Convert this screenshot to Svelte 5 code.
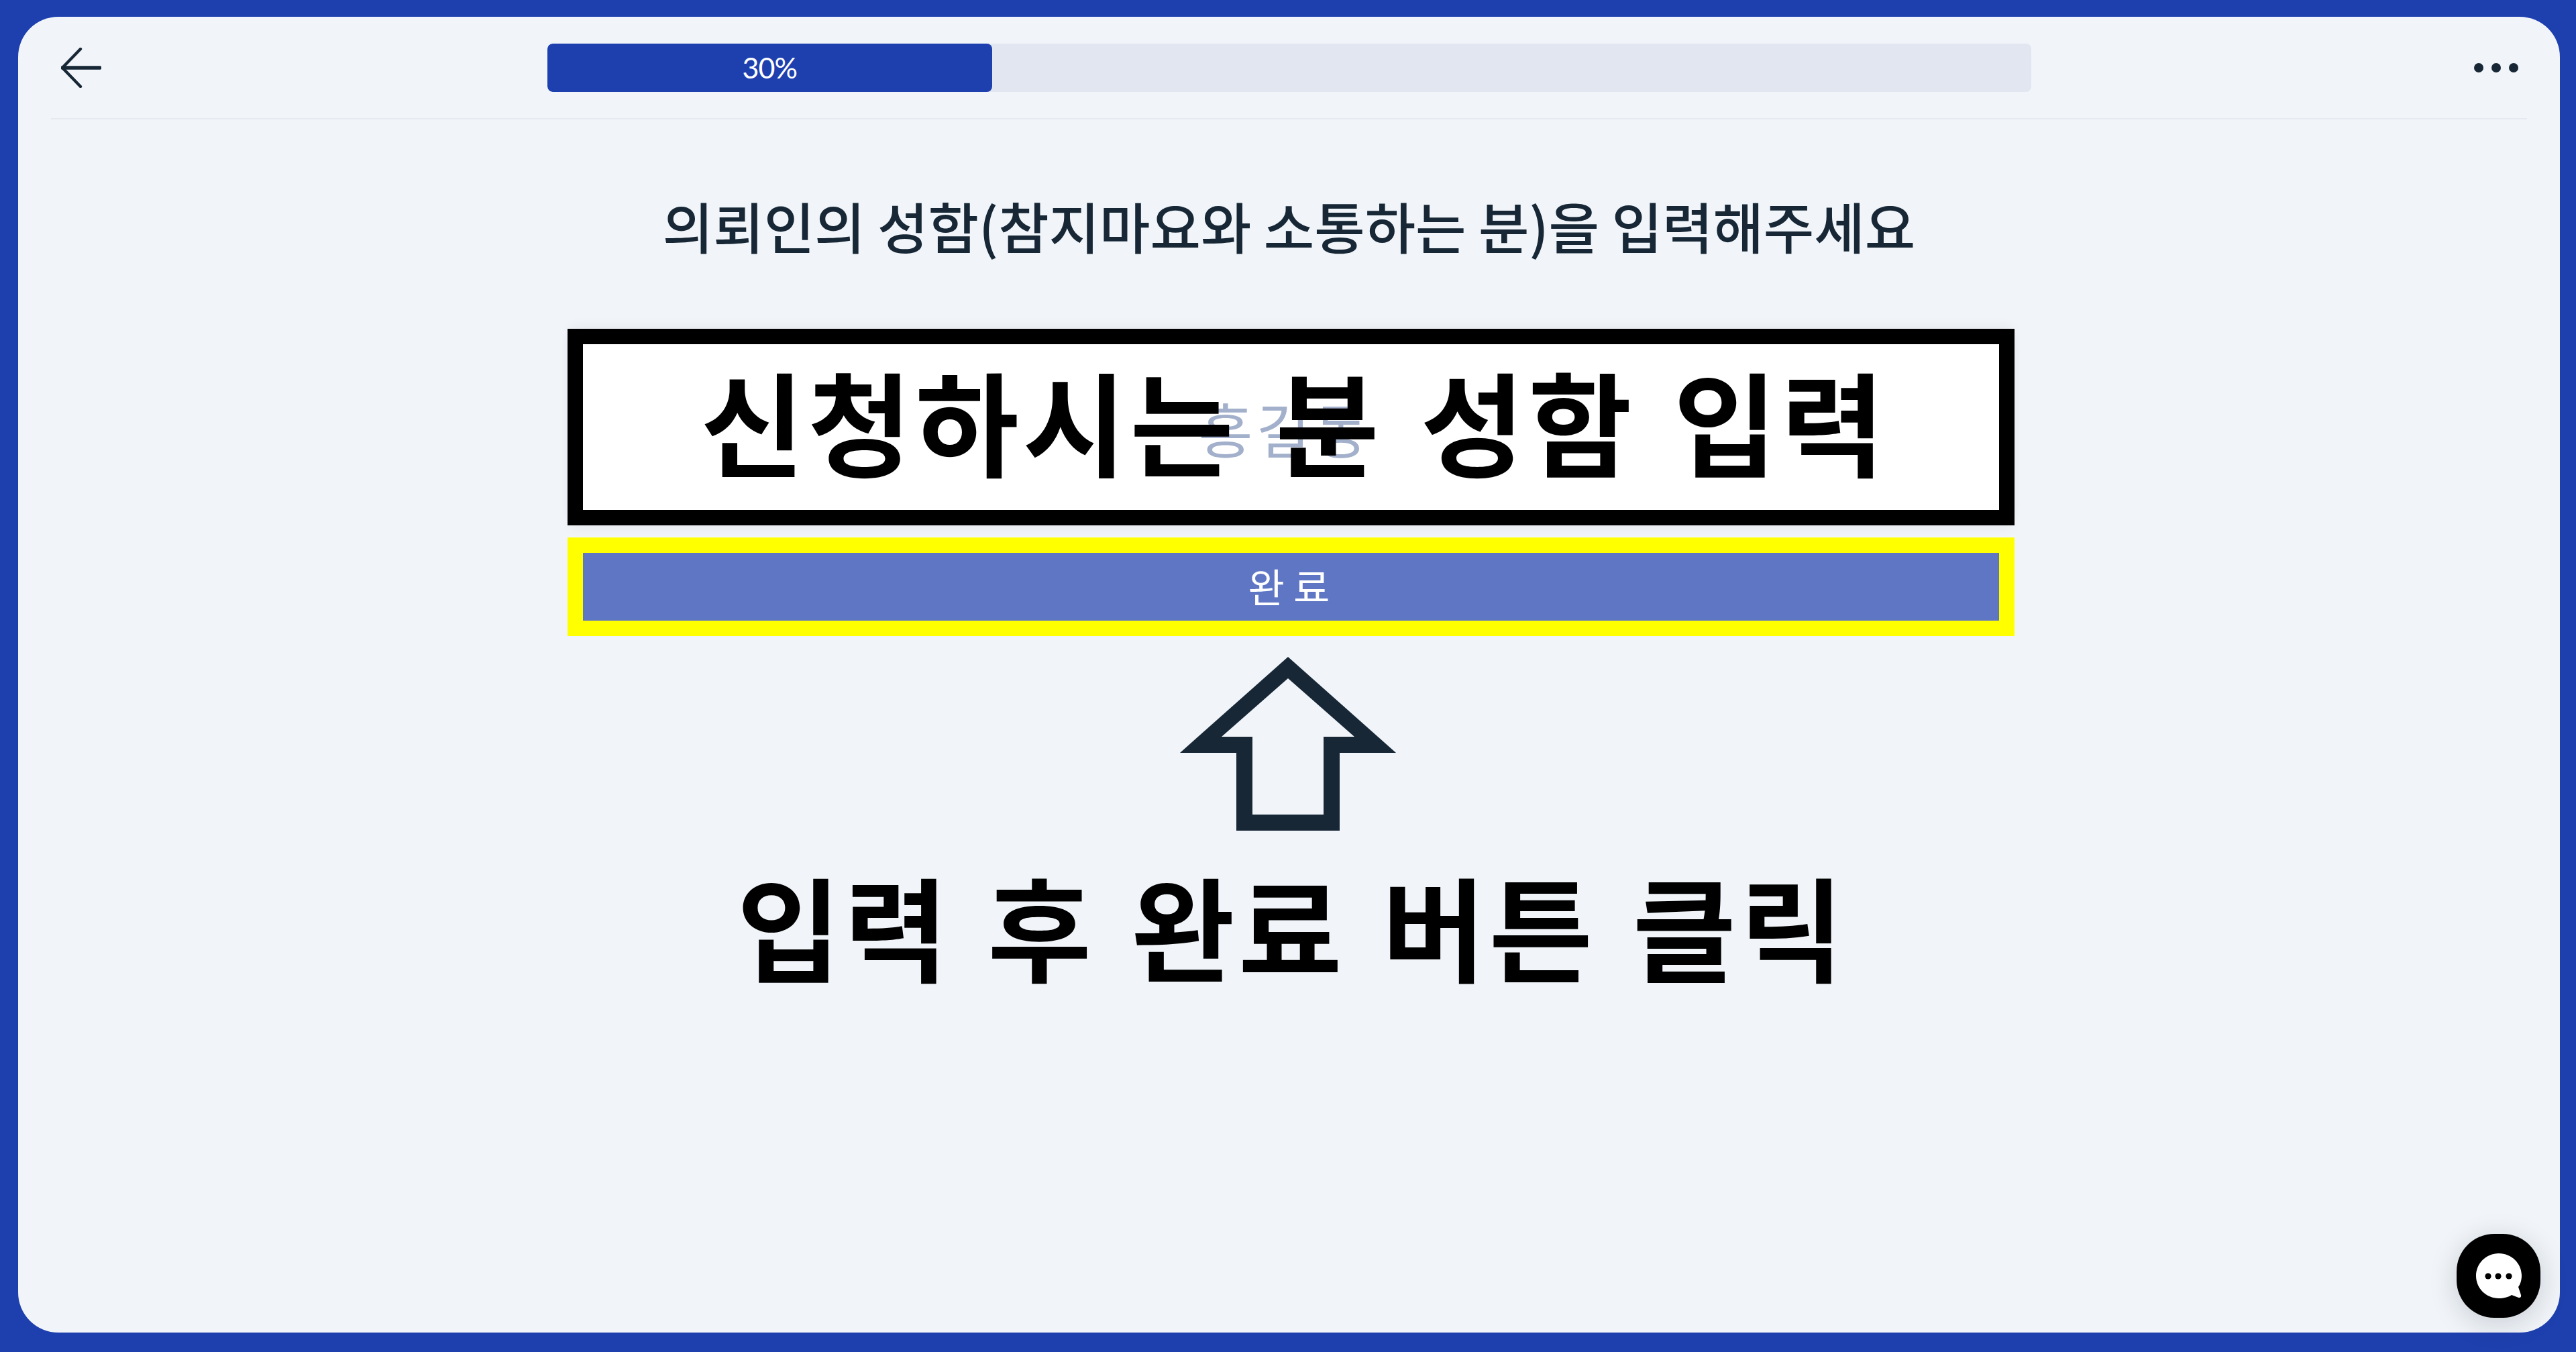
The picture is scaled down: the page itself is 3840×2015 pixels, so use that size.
<script>
  const qText = '의뢰인의 성함(참지마요와 소통하는 분)을 입력해주세요';
</script>

<div class="page">
  <div class="card">
    <header class="head">
      <button class="back" aria-label="뒤로">
        <svg width="60" height="60" viewBox="0 0 60 60" fill="none" stroke="#172736" stroke-linecap="round" stroke-linejoin="round">
          <path d="M29 2 L2 30 L29 58" stroke-width="4.400"/>
          <path d="M2 30 H58" stroke-width="5.400"/>
        </svg>
      </button>
      <div class="bar"><div class="fill">30%</div></div>
      <div class="dots"><i></i><i></i><i></i></div>
    </header>

    <main class="body">
      <h1 class="question">{qText}</h1>
      <div class="col">
        <div class="inputbox">
          <span class="ph">홍길동</span>
          <span class="big over">신청하시는 분 성함 입력</span>
        </div>
        <div class="btnbox"><button class="done">완 료</button></div>
        <svg class="uparrow" width="322" height="260" viewBox="0 0 322 260">
          <path fill="#172736" fill-rule="evenodd" d="M161 0 L322 143 H238 V259 H84 V143 H0 Z M161 32 L62 119 H108 V235 H214 V119 H260 Z"/>
        </svg>
        <div class="big caption">입력 후 완료 버튼 클릭</div>
      </div>
    </main>
  </div>
  <button class="chat" aria-label="채팅">
    <svg width="72" height="72" viewBox="0 0 72 72">
      <path fill="#fff" d="M36 2 C54.800 2 70 17 70 35 C70 42 68 48 65 52 L69 64 C69.800 67 68 68.500 65.500 68 L55 64 C50 67.500 43 69 36 69 C17 69 2 54 2 35.500 C2 17 17 2 36 2 Z"/>
      <circle cx="20" cy="36" r="4.600" fill="#000"/>
      <circle cx="35" cy="36" r="4.600" fill="#000"/>
      <circle cx="51" cy="36" r="4.600" fill="#000"/>
    </svg>
  </button>
</div>

<style>
  :global(body) {
    margin: 0;
    background: #1e40af;
  }
  .page {
    box-sizing: border-box;
    height: 2015px;
    padding: 25px 24px 29px 27px;
    position: relative;
    font-family: "Noto Sans CJK KR", "Noto Sans", sans-serif;
    overflow: hidden;
  }
  .card {
    height: 100%;
    background: #f1f5f9;
    border-radius: 60px;
    display: flex;
    flex-direction: column;
  }
  .head {
    height: 153px;
    box-sizing: border-box;
    margin: 0 49px;
    border-bottom: 2px solid #e6e9ef;
    display: grid;
    grid-template-columns: 1fr 2212px 1fr;
    align-items: center;
  }
  .back {
    background: none;
    border: 0;
    padding: 0 0 0 15px;
    justify-self: start;
    display: flex;
  }
  .bar {
    height: 72px;
    background: #e2e6f0;
    border-radius: 8px;
    overflow: hidden;
  }
  .fill {
    width: 30%;
    height: 100%;
    background: #1e40af;
    border-radius: 8px;
    color: #fff;
    font-family: Lato, sans-serif;
    font-weight: 400;
    font-size: 43px;
    letter-spacing: -1px;
    display: flex;
    align-items: center;
    justify-content: center;
  }
  .dots {
    justify-self: end;
    padding-right: 13px;
    display: flex;
    gap: 12px;
  }
  .dots i {
    width: 14px;
    height: 14px;
    border-radius: 50%;
    background: #172736;
  }
  .body {
    display: flex;
    flex-direction: column;
    align-items: center;
  }
  .question {
    margin: 105px 0 0;
    font-weight: 500;
    font-size: 82px;
    line-height: 106px;
    color: #172736;
    white-space: nowrap;
  }
  .col {
    margin: 101px 0 0 6px;
    width: 2157px;
    display: flex;
    flex-direction: column;
    align-items: center;
  }
  .inputbox {
    box-sizing: border-box;
    width: 100%;
    height: 293px;
    border: 23px solid #000;
    background: #fff;
    display: grid;
    place-items: center;
    box-shadow: 0 -8px 16px -4px rgba(15, 23, 42, 0.05), 0 8px 16px -4px rgba(15, 23, 42, 0.05);
  }
  .inputbox > span {
    grid-area: 1 / 1;
  }
  .ph {
    font-size: 88px;
    font-weight: 400;
    letter-spacing: 5px;
    color: #a3b0cb;
    margin-right: 18px;
  }
  .big {
    font-weight: 700;
    color: #000;
    font-size: 168px;
    line-height: 1.2;
    letter-spacing: 5.500px;
    word-spacing: 13px;
    white-space: nowrap;
  }
  .over {
    margin: 0 0 24px 10px;
  }
  .btnbox {
    box-sizing: border-box;
    width: 100%;
    height: 147px;
    margin-top: 18px;
    border: 23px solid #ffff00;
  }
  .done {
    width: 100%;
    height: 100%;
    border: 0;
    padding: 0 6px 4px 0;
    background: #5e76c4;
    color: #fff;
    font: 400 59px "Noto Sans CJK KR", sans-serif;
  }
  .uparrow {
    display: block;
    margin: 31px 9px 0 0;
  }
  .caption {
    margin: 38px -3px 0 0;
    word-spacing: 10px;
  }
  .chat {
    position: absolute;
    left: 3662px;
    top: 1839px;
    width: 125px;
    height: 125px;
    border: 0;
    padding: 0;
    border-radius: 56px;
    background: #000;
    display: flex;
    align-items: center;
    justify-content: center;
    box-shadow: 0 8px 40px rgba(15, 23, 42, 0.18);
  }
</style>
